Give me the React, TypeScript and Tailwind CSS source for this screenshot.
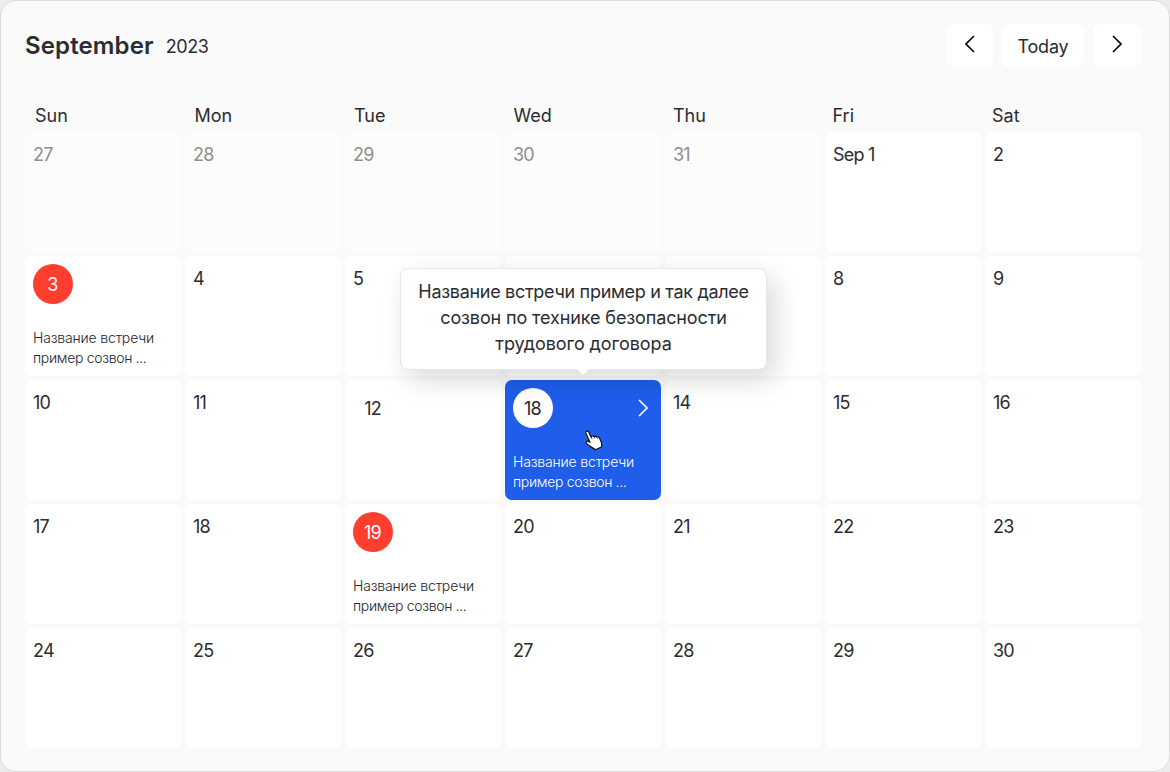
import React from "react";

type Day = { label: string; muted?: boolean; badge?: boolean; inset?: boolean; event?: string[]; active?: boolean };

const EVENT = ["Название встречи", "пример созвон ..."];

const WEEKDAYS = ["Sun", "Mon", "Tue", "Wed", "Thu", "Fri", "Sat"];

const DAYS: Day[] = [
  { label: "27", muted: true },
  { label: "28", muted: true },
  { label: "29", muted: true },
  { label: "30", muted: true },
  { label: "31", muted: true },
  { label: "Sep 1" },
  { label: "2" },
  { label: "3", badge: true, event: EVENT },
  { label: "4" },
  { label: "5" },
  { label: "" },
  { label: "" },
  { label: "8" },
  { label: "9" },
  { label: "10" },
  { label: "11" },
  { label: "12", inset: true },
  { label: "18", active: true, event: EVENT },
  { label: "14" },
  { label: "15" },
  { label: "16" },
  { label: "17" },
  { label: "18" },
  { label: "19", badge: true, event: EVENT },
  { label: "20" },
  { label: "21" },
  { label: "22" },
  { label: "23" },
  { label: "24" },
  { label: "25" },
  { label: "26" },
  { label: "27" },
  { label: "28" },
  { label: "29" },
  { label: "30" },
];

function Chevron({ dir, className }: { dir: "left" | "right"; className?: string }) {
  return (
    <svg
      width="10"
      height="18"
      viewBox="0 0 10 18"
      fill="none"
      stroke="currentColor"
      strokeWidth="1.6"
      className={className}
    >
      <path d={dir === "left" ? "M9 1L1 9L9 17" : "M1 1L9 9L1 17"} />
    </svg>
  );
}

function HandCursor() {
  return (
    <svg width="18" height="21" viewBox="0 0 18 21" className="absolute left-[80px] top-[50px]">
      <path
        d="M1.2 1.6C2.2 .7 3.3 1.1 3.8 2.2L6.2 7.2L6.6 6.2C7.6 5.5 8.6 5.9 9 6.7C10 5.8 11.2 6.1 11.7 7.1C12.9 6.4 14 6.9 14.5 8L16.3 12.2C17 14 16.6 15.4 16.5 17L10.3 19.8C9 18 5.2 17.2 2.3 14.2C.4 12.2 1.3 10.8 3 11.2L5 12.3L1 3.6C.7 2.8 .7 2.1 1.2 1.6Z"
        fill="#fff"
        stroke="#111"
        strokeWidth="1.2"
        strokeLinejoin="round"
      />
      <path d="M6.2 7.2L7.2 9.2M9 6.7L9.8 8.5M11.7 7.1L12.4 8.6" stroke="#111" strokeWidth=".8" fill="none" />
    </svg>
  );
}

function Tooltip() {
  return (
    <div className="absolute -left-[105px] -top-[112px] z-10 h-[102px] w-[367px] rounded-[8px] border border-[#e6e6e6] bg-white pt-[10px] text-center text-[18px] leading-[26px] text-[#2b2c31] shadow-[8px_10px_28px_rgba(0,0,0,0.15)]">
      <div className="tracking-[-0.3px]">Название встречи пример и так далее</div>
      <div className="tracking-[-0.12px]">созвон по технике безопасности</div>
      <div className="tracking-[-0.08px]">трудового договора</div>
      <svg width="12" height="6" viewBox="0 0 12 6" className="absolute left-[176px] top-[100px]">
        <path d="M0 0H12L6 6Z" fill="#fff" />
      </svg>
    </div>
  );
}

function Cell({ day }: { day: Day }) {
  const tone = day.active
    ? "bg-[#1e5eeb] text-white"
    : day.muted
      ? "bg-[#fcfcfc] text-[#8e8e90]"
      : "bg-white text-[#2b2c31]";
  const circle = day.badge
    ? "bg-[#ff3e30] text-white"
    : day.active
      ? "bg-white text-[#25262b]"
      : "bg-transparent";
  return (
    <div className={`relative flex flex-col justify-between rounded-[7px] p-2 ${tone}`}>
      {day.badge || day.active || day.inset ? (
        <div className="flex items-center justify-between">
          <span
            className={`flex size-10 items-center justify-center rounded-full pr-px pt-px text-[18px] tracking-[-0.8px] ${circle}`}
          >
            {day.label}
          </span>
          {day.active && <Chevron dir="right" className="mr-[5px]" />}
        </div>
      ) : (
        <span className="pt-px text-[18px] leading-7 tracking-[-0.8px]">{day.label}</span>
      )}
      {day.event && (
        <div className={`text-[14px] font-light leading-5 ${day.active ? "text-white" : "text-[#25262b]"}`}>
          <div className="whitespace-nowrap tracking-[-0.16px]">{day.event[0]}</div>
          <div className="whitespace-nowrap tracking-[-0.32px]">{day.event[1]}</div>
        </div>
      )}
      {day.active && <Tooltip />}
      {day.active && <HandCursor />}
    </div>
  );
}

export default function App() {
  return (
    <div className="h-[772px] w-[1170px] bg-[#ececec] font-['Inter','Noto_Sans',sans-serif]">
      <div className="flex h-[772px] w-[1170px] flex-col rounded-[16px] border border-[#dcdcdc] bg-[#fafafa] pl-6 pt-[23px] text-[#2b2c31]">
        <header className="flex h-[43px] w-[1116px] items-center justify-between">
          <div className="flex items-center gap-3">
            <h1 className="text-[24px] font-semibold tracking-[0.13px]">September</h1>
            <span className="pt-px text-[18px] tracking-[-0.4px]">2023</span>
          </div>
          <div className="flex h-[43px] gap-[9px]">
            <button className="flex w-[46px] items-center justify-center rounded-[7px] bg-white pb-1 text-black">
              <Chevron dir="left" />
            </button>
            <button className="w-[82px] rounded-[7px] bg-white pt-px text-[18px] tracking-[-0.2px]">Today</button>
            <button className="flex w-[48px] items-center justify-center rounded-[7px] bg-white pb-1 text-black">
              <Chevron dir="right" />
            </button>
          </div>
        </header>
        <div className="ml-[10px] mt-[35px] grid h-[29px] grid-cols-[repeat(7,159.5px)] text-[18px] leading-7">
          {WEEKDAYS.map((name) => (
            <span key={name}>{name}</span>
          ))}
        </div>
        <main className="mt-px grid auto-rows-[120px] grid-cols-[repeat(7,156px)] gap-1">
          {DAYS.map((day, i) => (
            <Cell key={i} day={day} />
          ))}
        </main>
      </div>
    </div>
  );
}
